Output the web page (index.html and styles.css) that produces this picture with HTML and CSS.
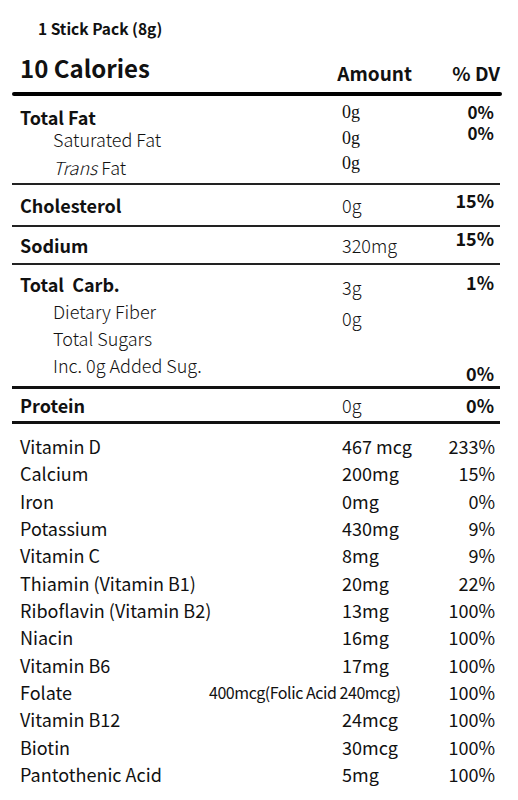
FILE: index.html
```html
<!DOCTYPE html>
<html>
  <head>
    <meta charset="utf-8" />
    <title>Supplement Facts</title>
    <link rel="stylesheet" href="styles.css">
  </head>
  <body>
    <div class="panel">
      <div class="serving">1 Stick Pack (8g)</div>
      <div class="head">
        <span class="calories">10 Calories</span>
        <span class="col-amount">Amount</span>
        <span class="col-dv">% DV</span>
      </div>
      <div class="rule thick"></div>

      <div class="block fat">
        <div class="names">
          <div class="main">Total Fat</div>
          <div class="sub sat">Saturated Fat</div>
          <div class="sub trans"><i>Trans</i> Fat</div>
        </div>
        <div class="amounts serif">
          <div>0g</div>
          <div>0g</div>
          <div>0g</div>
        </div>
        <div class="dvs">
          <div>0%</div>
          <div>0%</div>
        </div>
      </div>
      <div class="rule"></div>

      <div class="block single chol">
        <div class="names"><div class="main">Cholesterol</div></div>
        <div class="amounts"><div>0g</div></div>
        <div class="dvs"><div>15%</div></div>
      </div>
      <div class="rule"></div>

      <div class="block single sodium">
        <div class="names"><div class="main">Sodium</div></div>
        <div class="amounts"><div>320mg</div></div>
        <div class="dvs"><div>15%</div></div>
      </div>
      <div class="rule"></div>

      <div class="block carb">
        <div class="names">
          <div class="main">Total&nbsp; Carb.</div>
          <div class="sub">Dietary Fiber</div>
          <div class="sub">Total Sugars</div>
          <div class="sub">Inc. 0g Added Sug.</div>
        </div>
        <div class="amounts">
          <div>3g</div>
          <div class="fiber">0g</div>
        </div>
        <div class="dvs">
          <div>1%</div>
          <div class="added">0%</div>
        </div>
      </div>
      <div class="rule mid"></div>

      <div class="block single protein">
        <div class="names"><div class="main">Protein</div></div>
        <div class="amounts"><div>0g</div></div>
        <div class="dvs"><div>0%</div></div>
      </div>
      <div class="rule heavy"></div>

      <div class="vitamins">
        <div class="vit"><span>Vitamin D</span><span class="amt">467 mcg</span><span class="pct">233%</span></div>
        <div class="vit"><span>Calcium</span><span class="amt">200mg</span><span class="pct">15%</span></div>
        <div class="vit"><span>Iron</span><span class="amt">0mg</span><span class="pct">0%</span></div>
        <div class="vit"><span>Potassium</span><span class="amt">430mg</span><span class="pct">9%</span></div>
        <div class="vit"><span>Vitamin C</span><span class="amt">8mg</span><span class="pct">9%</span></div>
        <div class="vit"><span>Thiamin (Vitamin B1)</span><span class="amt">20mg</span><span class="pct">22%</span></div>
        <div class="vit"><span>Riboflavin (Vitamin B2)</span><span class="amt">13mg</span><span class="pct">100%</span></div>
        <div class="vit"><span>Niacin</span><span class="amt">16mg</span><span class="pct">100%</span></div>
        <div class="vit"><span>Vitamin B6</span><span class="amt">17mg</span><span class="pct">100%</span></div>
        <div class="vit"><span>Folate</span><span class="amt folate">400mcg(Folic Acid 240mcg)</span><span class="pct">100%</span></div>
        <div class="vit"><span>Vitamin B12</span><span class="amt">24mcg</span><span class="pct">100%</span></div>
        <div class="vit"><span>Biotin</span><span class="amt">30mcg</span><span class="pct">100%</span></div>
        <div class="vit"><span>Pantothenic Acid</span><span class="amt">5mg</span><span class="pct">100%</span></div>
      </div>
    </div>
  </body>
</html>
```

FILE: styles.css
```css
html,
body {
  margin: 0;
  padding: 0;
  background: #fff;
}

body {
  font-family: "Noto Sans CJK JP", "Noto Sans", sans-serif;
  color: #111;
}

.panel {
  padding: 0 16px 0 12px;
}

.serving {
  padding: 18px 0 0 26px;
  font-size: 15.5px;
  font-weight: 700;
  line-height: 20px;
}

.head {
  display: flex;
  align-items: flex-end;
  height: 54px;
  padding: 0 2px 0 8px;
}

.calories {
  flex: 1;
  font-size: 24px;
  font-weight: 700;
  line-height: 30px;
  padding-bottom: 9px;
}

.col-amount,
.col-dv {
  font-size: 19px;
  font-weight: 700;
  line-height: 24px;
  padding-bottom: 7px;
}

.col-dv {
  width: 88px;
  text-align: right;
}

.rule {
  height: 2px;
  margin-right: 2px;
  background: #222;
}

.rule.thick {
  height: 4px;
  margin-right: 0;
  border-radius: 2px;
  background: #000;
}

.rule.mid {
  height: 3px;
  background: #111;
}

.rule.heavy {
  height: 3px;
  background: #111;
}

.block {
  display: flex;
  padding: 0 8px;
  font-size: 18px;
}

.names {
  width: 322px;
}

.amounts {
  width: 100px;
  font-weight: 300;
}

.amounts.serif {
  font-family: "Liberation Serif", serif;
  font-size: 18px;
  font-weight: 400;
}

.dvs {
  flex: 1;
  text-align: right;
  font-weight: 700;
}

.main {
  font-weight: 700;
}

.sub {
  padding-left: 33px;
  font-weight: 300;
}

/* fat block */
.fat {
  height: 87px;
}

.fat .names {
  padding-top: 10px;
}

.fat .names div {
  line-height: 22px;
}

.fat .names .trans {
  line-height: 34px;
}

.fat .amounts {
  padding-top: 4px;
}

.fat .amounts div {
  line-height: 25.5px;
}

.fat .dvs {
  padding-top: 5px;
  font-size: 17px;
}

.fat .dvs div {
  line-height: 21px;
}

/* single rows */
.chol {
  height: 40px;
  line-height: 40px;
}

.chol .dvs {
  line-height: 30px;
}

.sodium {
  height: 36px;
  line-height: 36px;
}

.sodium .dvs {
  line-height: 22px;
}

/* carb block */
.carb {
  height: 121px;
}

.carb .names {
  padding-top: 6px;
}

.carb .names div {
  line-height: 27px;
}

.carb .amounts {
  padding-top: 8px;
}

.carb .amounts div {
  line-height: 28px;
}

.carb .amounts .fiber {
  margin-top: 3px;
}

.carb .dvs {
  padding-top: 3px;
}

.carb .dvs div {
  line-height: 28px;
}

.carb .dvs .added {
  margin-top: 63px;
}

.protein {
  height: 32px;
  line-height: 32px;
}

/* vitamins */
.vitamins {
  padding: 9px 7px 0 8px;
  font-size: 18px;
}

.vit {
  display: flex;
  line-height: 27.33px;
}

.vit span:first-child {
  width: 322px;
}

.vit .amt {
  width: 100px;
}

.vit .amt.folate {
  margin-left: -133px;
  width: 233px;
  font-size: 16px;
  letter-spacing: -0.45px;
}

.vit .pct {
  flex: 1;
  text-align: right;
}
```
